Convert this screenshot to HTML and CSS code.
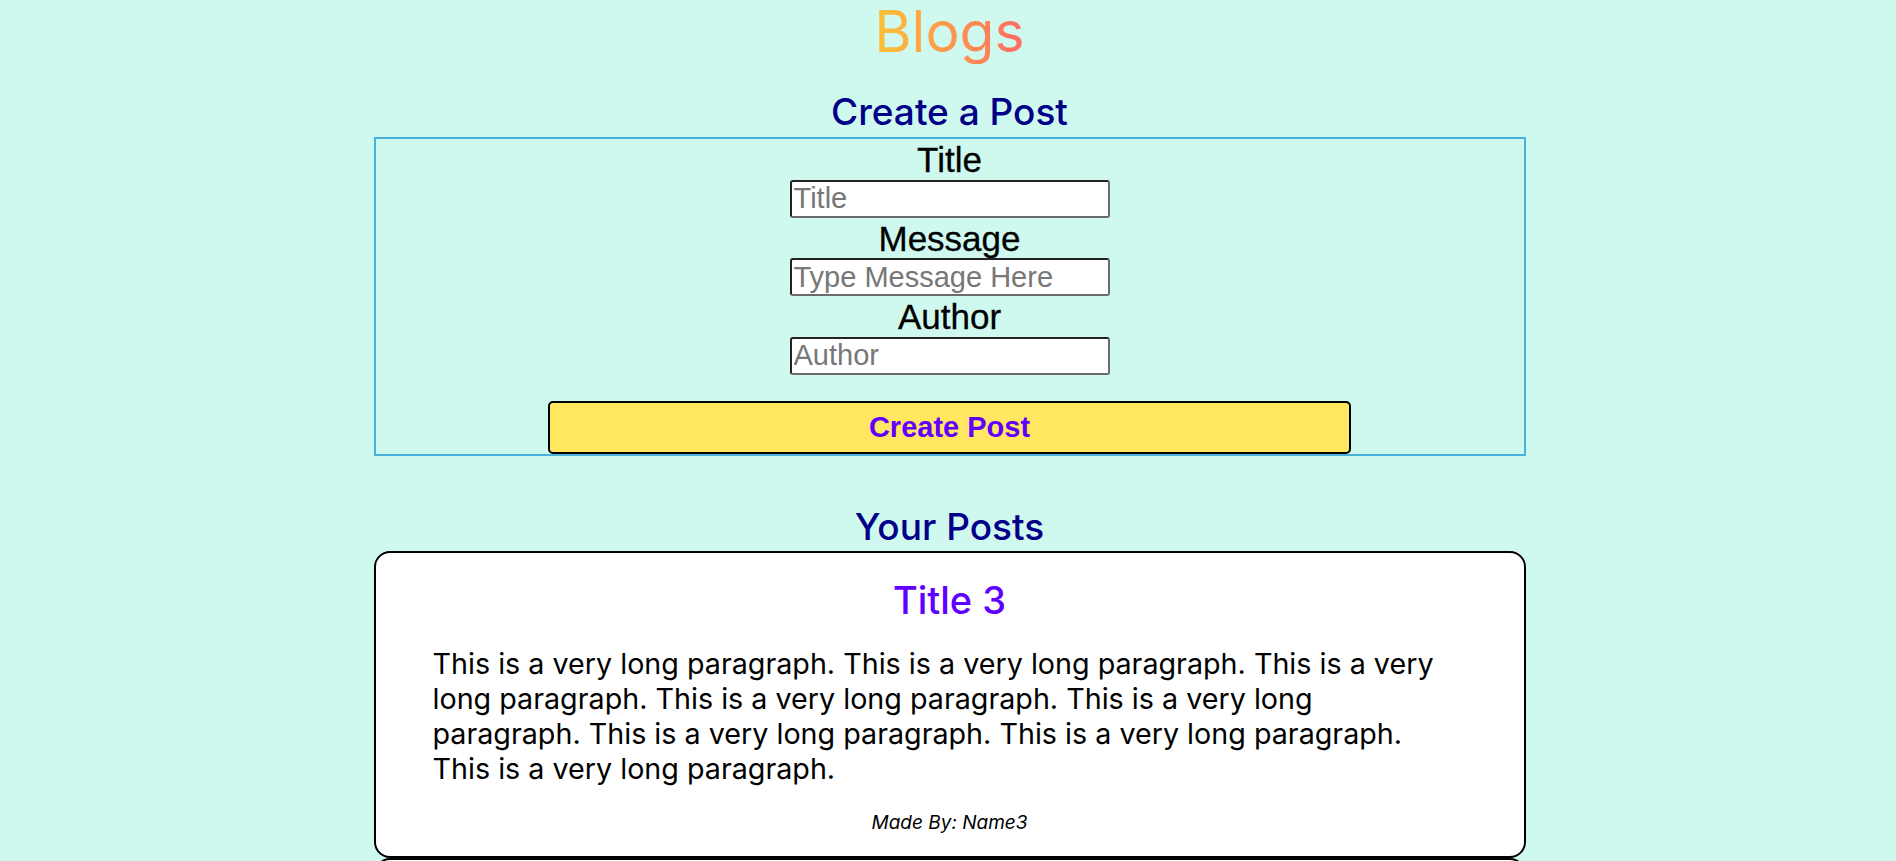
FILE: index.html
```html
<!DOCTYPE html>
<html lang="en">
<head>
<meta charset="utf-8">
<title>Blogs</title>
<link rel="stylesheet" href="styles.css">
</head>
<body>
<header class="brand-wrap">
  <h1 class="brand">Blogs</h1>
</header>
<main>
  <section class="create">
    <h2 class="section-title">Create a Post</h2>
    <form class="create-form">
      <label class="field-label" for="title">Title</label>
      <input class="field-input" id="title" type="text" placeholder="Title">
      <label class="field-label" for="message">Message</label>
      <input class="field-input" id="message" type="text" placeholder="Type Message Here">
      <label class="field-label" for="author">Author</label>
      <input class="field-input" id="author" type="text" placeholder="Author">
      <button class="submit-btn" type="button">Create Post</button>
    </form>
  </section>
  <section class="posts">
    <h2 class="section-title posts-title">Your Posts</h2>
    <div class="post-list">
      <article class="post-card">
        <h3 class="post-title">Title 3</h3>
        <p class="post-body">This is a very long paragraph. This is a very long paragraph. This is a very long paragraph. This is a very long paragraph. This is a very long paragraph. This is a very long paragraph. This is a very long paragraph. This is a very long paragraph.</p>
        <p class="post-author">Made By: Name3</p>
      </article>
      <article class="post-card">
        <h3 class="post-title">Title 2</h3>
        <p class="post-body">This is a very long paragraph. This is a very long paragraph. This is a very long paragraph.</p>
        <p class="post-author">Made By: Name2</p>
      </article>
    </div>
  </section>
</main>
</body>
</html>
```
FILE: styles.css
```css
* { box-sizing: border-box; }

body {
  margin: 0;
  padding-left: 3px;
  background: #cff8ee;
  font-family: "Inter", "Noto Sans", sans-serif;
  text-align: center;
  color: #000;
}

.brand-wrap {
  display: flex;
  justify-content: center;
}

.brand {
  margin: 0;
  font-size: 57px;
  font-weight: 400;
  line-height: 64px;
  background: linear-gradient(to right, #fdc235, #ff6b64);
  -webkit-background-clip: text;
  background-clip: text;
  color: transparent;
}

.section-title {
  margin: 25px 0 2px;
  font-size: 37px;
  font-weight: 500;
  line-height: 46px;
  color: #000088;
}

.create-form {
  max-width: 1152px;
  margin: 0 auto;
  border: 2px solid #4ab2da;
  display: flex;
  flex-direction: column;
  align-items: center;
}

.field-label {
  font-family: "Liberation Sans", Arial, sans-serif;
  font-size: 35px;
  line-height: 36px;
  margin-top: 3px;
  -webkit-text-stroke: 0.3px #000;
}

.field-input {
  width: 320px;
  height: 38px;
  margin-top: 1.5px;
  border: 2px solid #6b6b6b;
  border-top-color: #222;
  border-left-color: #222;
  border-radius: 3px;
  background: #fff;
  padding: 1px 2px;
  font-family: "Liberation Sans", Arial, sans-serif;
  font-size: 29px;
}

.field-input::placeholder { color: #777; }

.submit-btn {
  width: 70%;
  height: 53px;
  margin-top: 26px;
  background: #ffe762;
  border: 2px solid #000;
  border-radius: 5px;
  font-family: "Liberation Sans", Arial, sans-serif;
  font-weight: 700;
  font-size: 29px;
  color: #6200ff;
}

.posts-title { margin: 48px 0 1px; }

.post-list {
  max-width: 1152px;
  margin: 0 auto;
  display: flex;
  flex-direction: column;
}

.post-card {
  background: #fff;
  border: 2px solid #000;
  border-radius: 16px;
  padding: 24px 76px 21px 57px;
}

.post-title {
  margin: 0 -19px 0 0;
  font-size: 38px;
  font-weight: 500;
  line-height: 46px;
  color: #6100ff;
}

.post-body {
  margin: 23px 0 0;
  text-align: left;
  font-size: 28.7px;
  line-height: 35px;
}

.post-author {
  margin: 25px -19px 0 0;
  font-size: 19px;
  font-style: italic;
  line-height: 24px;
}
```
